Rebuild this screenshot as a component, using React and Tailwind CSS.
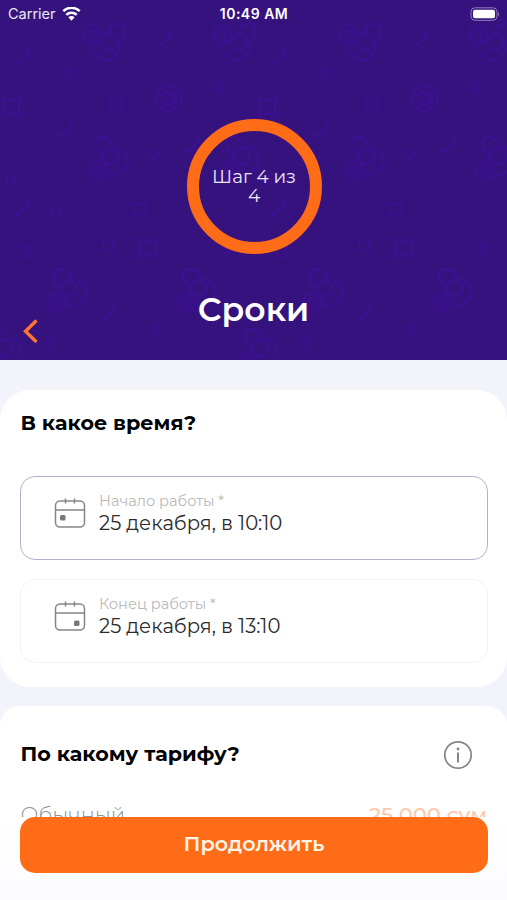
const stars = [
  [12, 107, 9],
  [116, 104, 6],
  [140, 209, 6],
  [108, 245, 6],
  [148, 248, 9],
  [26, 252, 6]
]

const strokes = [
  [24, 56],
  [165, 39],
  [66, 130],
  [193, 145],
  [23, 208],
  [108, 313]
]

const dots = [
  [71, 72],
  [219, 87],
  [153, 154],
  [56, 212],
  [-28, 249],
  [228, 249],
  [156, 329],
  [50, 343],
  [11, 180]
]

const flowers = [
  [106, 38, 0],
  [236, 38, 0],
  [106, 158, -75],
  [237, 158, -75],
  [64, 290, -75],
  [194, 290, -75],
  [0, 350, -75]
]

function Star({ x, y, r }) {
  return (
    <g transform={`translate(${x} ${y}) scale(${r / 9})`}>
      <path d="M-9-9Q0-4 9-9Q4 0 9 9Q0 4-9 9Q-4 0-9-9Z" />
    </g>
  )
}

function Flower({ x, y, turn }) {
  return (
    <g transform={`translate(${x} ${y}) rotate(${turn})`}>
      <circle cx="-14" cy="-4" r="9" />
      <circle cx="-14" cy="-4" r="4" />
      <circle cx="3" cy="4" r="8" />
      <path d="M-16 7Q-12 19 1 23Q15 18 13 8M10 7Q22-1 18-14Q7-17 0-4" />
    </g>
  )
}

function Pattern() {
  return (
    <svg className="absolute inset-0" width="507" height="360" fill="none" stroke="#43109f" strokeWidth="2.2" opacity="0.6">
      {[0, 256].map((offset) => (
        <g key={offset} transform={`translate(${offset} 0)`}>
          {stars.map(([x, y, r]) => (
            <Star key={`${x}-${y}`} x={x} y={y} r={r} />
          ))}
          {strokes.map(([x, y]) => (
            <path key={`${x}-${y}`} d={`M${x - 8} ${y + 7}q10-3 14-14q-1 9-14 14`} />
          ))}
          {dots.map(([x, y]) => (
            <circle key={`${x}-${y}`} cx={x} cy={y} r="4.5" />
          ))}
          {flowers.map(([x, y, turn]) => (
            <Flower key={`${x}-${y}`} x={x} y={y} turn={turn} />
          ))}
          <circle cx="169" cy="98" r="12.5" />
          <circle cx="169" cy="98" r="7" />
          <path d="M165 93q9 0 8 8q-5 3-8-2" />
        </g>
      ))}
    </svg>
  )
}

function StatusBar() {
  return (
    <div className="relative grid h-7 grid-cols-3 items-center pl-[8px] pr-[7px] font-['Inter',sans-serif] text-white">
      <div className="flex items-center gap-[6px]">
        <span className="text-[14.5px] text-white/90">Carrier</span>
        <svg width="19" height="15" viewBox="0 0 19 15" fill="none" stroke="white" strokeWidth="2.5">
          <path d="M1.3 4.2a11.6 11.6 0 0 1 16.4 0" />
          <path d="M4.3 7.8a7.4 7.4 0 0 1 10.4 0" />
          <path d="M6.4 10.3a4.4 4.4 0 0 1 6.2 0L9.5 13.7z" fill="white" stroke="none" />
        </svg>
      </div>
      <span className="pb-px text-center text-[14px] font-semibold tracking-[0.5px]">10:49 AM</span>
      <svg className="justify-self-end" width="31" height="15" viewBox="0 0 31 15">
        <rect x="2" y="0.8" width="26" height="12.5" rx="4" fill="none" stroke="white" strokeOpacity="0.45" />
        <rect x="4" y="2.8" width="22" height="8.5" rx="2" fill="white" />
        <path d="M29.2 5q1.8 2 0 4.5z" fill="white" fillOpacity="0.5" />
      </svg>
    </div>
  )
}

function Header() {
  return (
    <header className="relative h-[360px] bg-[#36127f]">
      <Pattern />
      <StatusBar />
      <div className="relative ml-[186.5px] mt-[91px] h-[135px] w-[135px] rounded-full border-[12px] border-[#ff6c17] px-[10px] pt-[36px] text-center text-[18.4px] leading-[19px] text-[#ece6f7]">
        Шаг 4 из 4
      </div>
      <h1 className="relative mt-[35px] text-center text-[33px] font-semibold leading-[40px] text-white">
        Сроки
      </h1>
      <button className="absolute left-[21px] top-[317px]" aria-label="Назад">
        <svg width="20" height="28" viewBox="0 0 20 28" fill="none" stroke="#ff7430" strokeWidth="3.4">
          <path d="M15.5 3.5L4.5 14.2L15.5 25" />
        </svg>
      </button>
    </header>
  )
}

function CalendarIcon({ dotX, dotY }) {
  return (
    <svg width="32" height="32" viewBox="0 0 32 32" fill="none" stroke="#85858e" strokeWidth="1.5">
      <rect x="1.5" y="4" width="29" height="26" rx="4.5" />
      <path d="M1.5 13H30.5M11.5 1.5V6.5M20.5 1.5V6.5" />
      <rect x={dotX} y={dotY} width="5.5" height="5.5" rx="1.5" fill="#777780" stroke="none" />
    </svg>
  )
}

function DateField({ label, value, dotX, dotY, active }) {
  return (
    <div
      className={`flex h-[84px] items-start rounded-[15px] border pl-[33px] ${
        active ? "border-[#b4afd0]" : "border-[#f3f3f5]"
      }`}
    >
      <div className="mt-[20px]">
        <CalendarIcon dotX={dotX} dotY={dotY} />
      </div>
      <div className="ml-[13px] mt-[14px]">
        <p className="text-[14.6px] leading-[20px] text-[#b9b9bc]">{label}</p>
        <p className="text-[19.6px] leading-[24px] text-[#2b2b2d]">{value}</p>
      </div>
    </div>
  )
}

function InfoIcon() {
  return (
    <svg width="30" height="30" viewBox="0 0 30 30" fill="none" stroke="#85858e" strokeWidth="1.7">
      <circle cx="15" cy="15" r="13.2" />
      <path d="M15 12.5V22.5" strokeWidth="2" />
      <circle cx="15" cy="9" r="1.4" fill="#85858e" stroke="none" />
    </svg>
  )
}

export default function App() {
  return (
    <div className="relative h-[900px] w-[507px] overflow-hidden bg-[#f3f3fc] font-['Montserrat','Inter',sans-serif]">
      <Header />

      <section className="mt-[30px] h-[297px] rounded-[30px] bg-white pl-[20px] pr-[19px] pt-[20px]">
        <h2 className="pl-[0.6px] text-[20.7px] font-bold leading-[26px] text-black">В какое время?</h2>
        <div className="mt-[40px] flex flex-col gap-[18.5px]">
          <DateField label="Начало работы *" value="25 декабря, в 10:10" dotX={6} dotY={18} active />
          <DateField label="Конец работы *" value="25 декабря, в 13:10" dotX={20} dotY={20.5} />
        </div>
      </section>

      <section className="mt-[19px] h-[220px] rounded-t-[20px] bg-white pl-[20.5px] pr-[20px] pt-[34px]">
        <div className="flex h-[30px] items-center justify-between pr-[14px]">
          <h2 className="mb-[2px] text-[20.7px] font-bold leading-[26px] text-black">По какому тарифу?</h2>
          <InfoIcon />
        </div>
        <div className="mt-[32px] flex justify-between text-[21px] leading-[26px]">
          <span className="font-light text-[#929292]">Обычный</span>
          <span className="font-medium text-[#ffc8aa]">25 000 сум</span>
        </div>
      </section>

      <footer className="absolute inset-x-0 bottom-0 h-[83px] bg-linear-to-b from-white to-[#fcfcff] pl-[20px] pr-[19px]">
        <button className="h-[56px] w-full rounded-[15px] bg-[#ff6c17] pb-[3px] text-[20.7px] font-semibold text-[#fff5e9]">
          Продолжить
        </button>
      </footer>
    </div>
  )
}
